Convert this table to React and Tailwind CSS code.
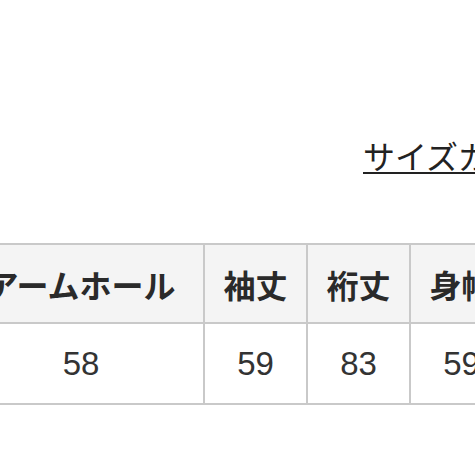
const headers = ['アームホール', '袖丈', '裄丈', '身幅', '着丈'];
const values = ['58', '59', '83', '59', '70'];

const jp = { fontFamily: '"Noto Sans CJK JP", "Noto Sans", sans-serif' };
const num = { fontFamily: '"Liberation Sans", Arial, sans-serif' };

export default function App() {
  return (
    <div className="w-[475px] h-[475px] overflow-hidden bg-white relative">
      {/* size guide link */}
      <div
        className="pt-[139px] pl-[363px] whitespace-nowrap text-[32px] leading-[32px] text-[#222]"
        style={jp}
      >
        <span className="underline decoration-2 underline-offset-[3px]">サイズガイド</span>
      </div>

      {/* measurement table */}
      <div className="mt-[72px] ml-[-43px] w-max">
        <div className="grid grid-cols-[244px_101px_101px_101px_101px] gap-[2px] p-[2px] bg-[#c9c9c9]">
          {headers.map((h) => (
            <div
              key={h}
              className="h-[77px] bg-[#f4f4f4] flex items-center justify-center whitespace-nowrap text-[32px] font-bold text-[#2a2a2a]"
              style={jp}
            >
              {h}
            </div>
          ))}
          {values.map((v, i) => (
            <div
              key={i}
              className="h-[79px] bg-white flex items-center justify-center text-[33px] text-[#333]"
              style={num}
            >
              {v}
            </div>
          ))}
        </div>
      </div>
    </div>
  );
}
